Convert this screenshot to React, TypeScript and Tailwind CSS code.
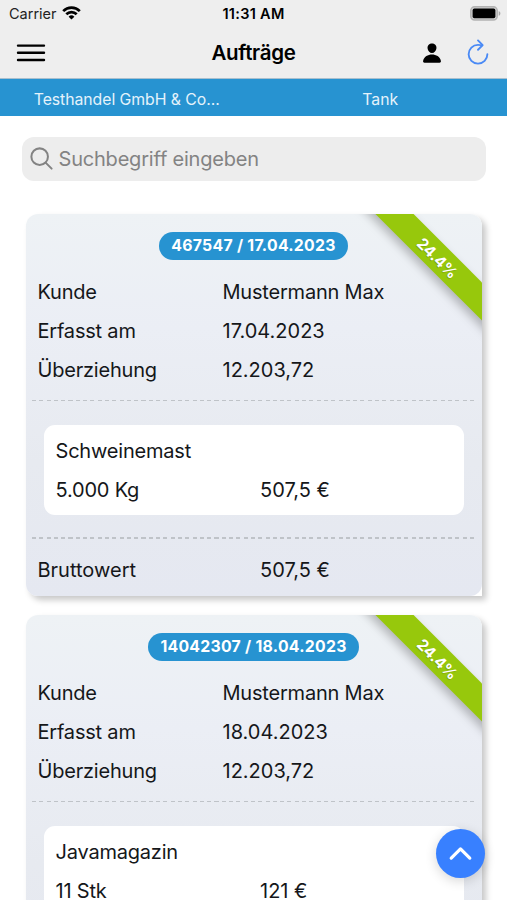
import React from "react";
import {
    IoChevronUpOutline,
    IoPerson,
    IoRefreshOutline,
    IoSearchOutline,
} from "react-icons/io5";

interface Auftrag {
    nummer: string;
    datum: string;
    kunde: string;
    ueberziehung: string;
    rabatt: string;
    artikel: string;
    menge: string;
    preis: string;
    brutto?: string;
}

const auftraege: Auftrag[] = [
    {
        nummer: "467547",
        datum: "17.04.2023",
        kunde: "Mustermann Max",
        ueberziehung: "12.203,72",
        rabatt: "24.4%",
        artikel: "Schweinemast",
        menge: "5.000 Kg",
        preis: "507,5 €",
        brutto: "507,5 €",
    },
    {
        nummer: "14042307",
        datum: "18.04.2023",
        kunde: "Mustermann Max",
        ueberziehung: "12.203,72",
        rabatt: "24.4%",
        artikel: "Javamagazin",
        menge: "11 Stk",
        preis: "121 €",
    },
];

const StatusBar: React.FC = () => (
    <div className="grid h-7 shrink-0 grid-cols-3 items-center pl-[9px] pr-[6px] text-[14.5px] leading-7">
        <div className="flex items-center gap-[5px] text-[#222]">
            <span>Carrier</span>
            <svg width="19" height="14" viewBox="0 0 19 14" fill="none" stroke="#000" strokeWidth="2.7" className="-mt-[2px]">
                <path d="M1.2 5.1a11.7 11.7 0 0 1 16.6 0" />
                <path d="M4.3 8.3a7.4 7.4 0 0 1 10.4 0" />
                <path d="M9.5 13.6 6.6 10.7a4.1 4.1 0 0 1 5.8 0Z" fill="#000" stroke="none" />
            </svg>
        </div>
        <div className="-ml-[3px] text-center font-semibold whitespace-nowrap tracking-[0.3px]">11:31 AM</div>
        <div className="-mt-[2px] flex justify-end">
            <svg width="31" height="15" viewBox="0 0 31 15">
                <rect x="0.8" y="0.8" width="26.4" height="13.2" rx="3.8" fill="#d0d0d0" stroke="#b2b2b2" strokeWidth="1.5" />
                <rect x="2.6" y="2.6" width="22.8" height="9.6" rx="1.8" fill="#000" />
                <path d="M28.7 5v4.8c1-.4 1.7-1.3 1.7-2.4S29.7 5.4 28.7 5Z" fill="#a9a9a9" />
            </svg>
        </div>
    </div>
);

const Header: React.FC = () => (
    <header className="grid h-[50px] shrink-0 grid-cols-3 items-center px-4">
        <svg width="30" height="20" viewBox="0 0 30 20" stroke="#000" strokeWidth="2.4" strokeLinecap="round">
            <path d="M2 2.6h26M2 9.8h26M2 17h26" />
        </svg>
        <h1 className="text-center text-[20.5px] font-semibold tracking-[-0.3px]">Aufträge</h1>
        <div className="flex items-center justify-end gap-[20px]">
            <IoPerson size={22} />
            <IoRefreshOutline size={30} className="-mr-[2px] -mt-[2px] text-[#4a8af5]" />
        </div>
    </header>
);

const Row: React.FC<{ label: string; value: string }> = ({ label, value }) => (
    <div className="flex h-[39px] items-center">
        <span className="w-[185px]">{label}</span>
        <span className={/^\d/.test(value) ? "tracking-[0px]" : ""}>{value}</span>
    </div>
);

const Divider: React.FC = () => (
    <div className="mx-[6px] h-[1.5px] bg-[repeating-linear-gradient(90deg,#bfc3c8_0_4px,transparent_4px_7.3px)]" />
);

const AuftragCard: React.FC<{ auftrag: Auftrag }> = ({ auftrag }) => (
    <div className="rounded-[12px] rounded-br-none bg-white shadow-[4px_4px_6px_rgba(0,0,0,0.22)]">
        <article className="relative h-[382px] overflow-hidden rounded-[12px] bg-[linear-gradient(180deg,#eef2f5_0%,#ebeef5_30%,#e7eaf0_65%,#e5e8f1_100%)]">
            <div className="flex justify-center pt-[18px]">
                <span className="h-7 rounded-full bg-[#2793d1] px-3 text-[15.8px] leading-[28.5px] font-bold tracking-[0.27px] text-white">
                    {auftrag.nummer} / {auftrag.datum}
                </span>
            </div>
            <div className="px-3 pt-[12.5px]">
                <Row label="Kunde" value={auftrag.kunde} />
                <Row label="Erfasst am" value={auftrag.datum} />
                <Row label="Überziehung" value={auftrag.ueberziehung} />
            </div>
            <div className="pt-[10.5px]">
                <Divider />
            </div>
            <div className="mx-[18px] mt-[23.5px] h-[90.5px] rounded-[11px] bg-white px-3 pt-[6.5px]">
                <div className="flex h-[39px] items-center">{auftrag.artikel}</div>
                <div className="flex h-[39px] items-center">
                    <span className="w-[204.5px]">{auftrag.menge}</span>
                    <span className="tracking-[0px]">{auftrag.preis}</span>
                </div>
            </div>
            {auftrag.brutto && (
                <>
                    <div className="pt-[22px]">
                        <Divider />
                    </div>
                    <div className="mt-[12px] flex h-[39px] items-center px-3">
                        <span className="w-[222.5px] tracking-[0px]">Bruttowert</span>
                        <span className="tracking-[0px]">{auftrag.brutto}</span>
                    </div>
                </>
            )}

            {/* Rabatt-Band */}
            <div className="absolute top-[30.5px] -right-[56px] flex h-[27px] w-[200px] rotate-45 items-center justify-center bg-[#97c80c] pt-[3px] text-[15.5px] font-bold text-white shadow-[0_5px_10px_rgba(0,0,0,0.25)] [text-shadow:0_1px_1px_rgba(0,0,0,0.2)]">
                {auftrag.rabatt}
            </div>
        </article>
    </div>
);

const App: React.FC = () => {
    return (
        <div className="relative flex h-[900px] w-[507px] flex-col overflow-hidden bg-white font-['Inter',sans-serif] text-black">
            <div className="shrink-0 bg-[#eeeeee]">
                <StatusBar />
                <Header />
            </div>
            <div className="grid h-[38px] shrink-0 grid-cols-2 items-center border-t border-[#a9bfce] bg-[#2793d1] pt-[4px] text-center text-[15.8px] text-[#e4f2fb]">
                <span className="tracking-[-0.05px]">Testhandel GmbH &amp; Co...</span>
                <span>Tank</span>
            </div>

            <main className="px-[25.5px]">
                <div className="-mx-1 mt-[20.5px] flex h-[44px] items-center gap-[4px] rounded-[12px] bg-[#ededed] pl-[6px] text-[20px] tracking-[-0.2px] text-[#838383]">
                    <IoSearchOutline size={27} className="[&_path]:stroke-[38px]" />
                    <span>Suchbegriff eingeben</span>
                </div>
                <div className="mt-[33px] flex flex-col gap-[19px] text-[20px] tracking-[-0.2px] text-[#15171a]">
                    {auftraege.map((auftrag) => (
                        <AuftragCard key={auftrag.nummer} auftrag={auftrag} />
                    ))}
                </div>
            </main>

            <button className="absolute right-[22px] bottom-[22px] flex size-[49px] items-center justify-center rounded-full bg-[#3880ff] text-white shadow-[0_3px_12px_rgba(0,0,0,0.16)]">
                <IoChevronUpOutline size={33} className="[&_path]:stroke-[50px]" />
            </button>
        </div>
    );
};

export default App;
